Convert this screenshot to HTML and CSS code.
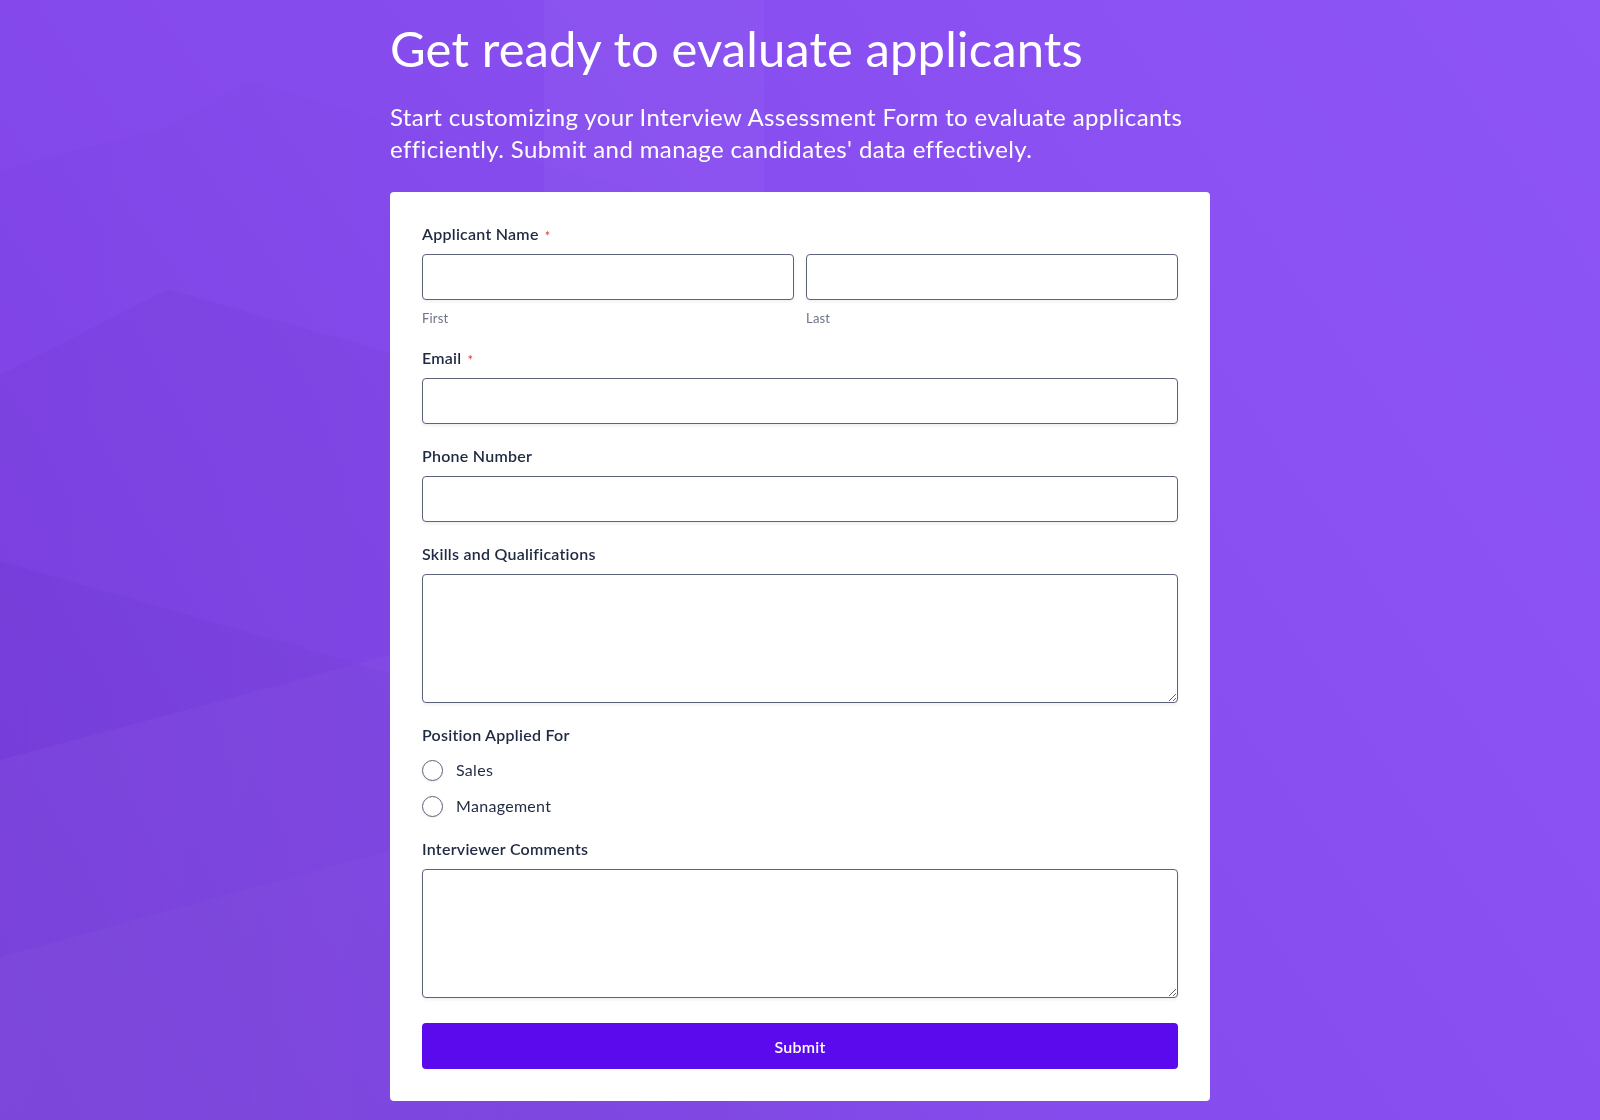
FILE: index.html
```html
<!DOCTYPE html>
<html lang="en">
<head>
<meta charset="utf-8">
<title>Interview Assessment Form</title>
<link rel="stylesheet" href="styles.css">
</head>
<body>
<div class="backdrop" aria-hidden="true">
  <svg class="backdrop-svg" viewBox="0 0 1600 1120" preserveAspectRatio="none" xmlns="http://www.w3.org/2000/svg">
    <defs>
      <linearGradient id="bgGrad" x1="1600" y1="0" x2="0" y2="1120" gradientUnits="userSpaceOnUse">
        <stop offset="0" stop-color="#8e55f6"/>
        <stop offset="0.5" stop-color="#874cee"/>
        <stop offset="1" stop-color="#7e42e5"/>
      </linearGradient>
      <linearGradient id="fadeDark" x1="0" y1="0" x2="1100" y2="0" gradientUnits="userSpaceOnUse">
        <stop offset="0" stop-color="#2a0070" stop-opacity="0.045"/>
        <stop offset="0.6" stop-color="#2a0070" stop-opacity="0.025"/>
        <stop offset="1" stop-color="#2a0070" stop-opacity="0"/>
      </linearGradient>
      <linearGradient id="fadeLight" x1="0" y1="0" x2="1100" y2="0" gradientUnits="userSpaceOnUse">
        <stop offset="0" stop-color="#ffffff" stop-opacity="0.035"/>
        <stop offset="1" stop-color="#ffffff" stop-opacity="0"/>
      </linearGradient>
    </defs>
    <rect x="0" y="0" width="1600" height="1120" fill="url(#bgGrad)"/>
    <rect x="544" y="0" width="220" height="192" fill="#ffffff" opacity="0.03"/>
    <polygon points="0,170 163,128 250,82 1600,460 1600,1120 0,1120" fill="url(#fadeDark)" opacity="0.5"/>
    <polygon points="0,375 168,289 1600,700 1600,1120 0,1120" fill="url(#fadeDark)"/>
    <polygon points="0,760 1600,330 1600,1120 0,1120" fill="url(#fadeLight)"/>
    <polygon points="0,561 1600,1020 1600,1120 0,1120" fill="url(#fadeDark)"/>
    <polygon points="0,957 1600,520 1600,1120 0,1120" fill="url(#fadeLight)" opacity="0.6"/>
  </svg>
</div>

<main class="page">
  <h1 class="title">Get ready to evaluate applicants</h1>
  <p class="subtitle">Start customizing your Interview Assessment Form to evaluate applicants efficiently. Submit and manage candidates' data effectively.</p>

  <form class="card">
    <div class="field">
      <label class="label">Applicant Name<span class="req">*</span></label>
      <div class="name-row">
        <div class="name-col">
          <input class="input" type="text">
          <span class="sublabel">First</span>
        </div>
        <div class="name-col">
          <input class="input" type="text">
          <span class="sublabel">Last</span>
        </div>
      </div>
    </div>

    <div class="field">
      <label class="label">Email<span class="req">*</span></label>
      <input class="input" type="email">
    </div>

    <div class="field">
      <label class="label">Phone Number</label>
      <input class="input" type="tel">
    </div>

    <div class="field">
      <label class="label">Skills and Qualifications</label>
      <textarea class="textarea"></textarea>
    </div>

    <div class="field field-radio">
      <span class="label">Position Applied For</span>
      <div class="radios">
        <label class="radio-row"><input class="radio" type="radio" name="position"><span class="radio-text">Sales</span></label>
        <label class="radio-row"><input class="radio" type="radio" name="position"><span class="radio-text">Management</span></label>
      </div>
    </div>

    <div class="field field-last">
      <label class="label">Interviewer Comments</label>
      <textarea class="textarea"></textarea>
    </div>

    <button class="submit" type="button">Submit</button>
  </form>
</main>
</body>
</html>
```

FILE: styles.css
```css
* {
  box-sizing: border-box;
}

html, body {
  margin: 0;
  padding: 0;
  height: 100%;
  overflow: hidden;
}

body {
  font-family: Lato, "Noto Sans", "Liberation Sans", sans-serif;
  background: #8449ea;
  color: #2c3345;
}

.backdrop {
  position: fixed;
  inset: 0;
  z-index: 0;
}

.backdrop-svg {
  display: block;
  width: 100%;
  height: 100%;
}

.page {
  position: relative;
  z-index: 1;
  width: 820px;
  margin: 0 auto;
  padding-top: 19px;
}

.title {
  margin: 0;
  font-size: 49px;
  line-height: 58px;
  font-weight: 400;
  letter-spacing: 0.1px;
  color: #ffffff;
}

.subtitle {
  margin: 24px 0 27px;
  font-size: 24px;
  line-height: 32px;
  font-weight: 400;
  letter-spacing: 0.38px;
  color: #ffffff;
}

.card {
  background: #ffffff;
  border-radius: 4px;
  padding: 32px;
}

.field {
  margin-bottom: 22px;
}

.field-radio {
  margin-bottom: 20px;
}

.field-last {
  margin-bottom: 25px;
}

.label {
  display: block;
  height: 20px;
  font-size: 16px;
  line-height: 20px;
  font-weight: 600;
  letter-spacing: 0.25px;
  color: #1f2a42;
  margin-bottom: 10px;
}

.req {
  color: #e5382f;
  font-size: 13px;
  line-height: 1;
  font-weight: 400;
  margin-left: 6px;
  position: relative;
  top: 1px;
}

.name-row {
  display: flex;
  gap: 12px;
}

.name-col {
  flex: 1 1 0;
  display: flex;
  flex-direction: column;
}

.input {
  display: block;
  width: 100%;
  height: 46px;
  border: 1px solid #5e6478;
  border-radius: 4px;
  background: #ffffff;
  box-shadow: 0 2px 3px rgba(60, 70, 100, 0.08);
  font: inherit;
  padding: 0 12px;
  outline: none;
}

.sublabel {
  display: block;
  margin-top: 10px;
  font-size: 13px;
  line-height: 16px;
  letter-spacing: 0.2px;
  color: #6c7385;
}

.textarea {
  display: block;
  width: 100%;
  height: 129px;
  border: 1px solid #5e6478;
  border-radius: 4px;
  background: #ffffff;
  box-shadow: 0 2px 3px rgba(60, 70, 100, 0.08);
  font: inherit;
  padding: 10px 12px;
  outline: none;
  resize: vertical;
}

.radios {
  display: flex;
  flex-direction: column;
  gap: 10px;
  margin-top: 12px;
}

.radio-row {
  display: flex;
  align-items: center;
  gap: 13px;
  height: 26px;
}

.radio {
  appearance: none;
  -webkit-appearance: none;
  margin: 0;
  width: 21px;
  height: 21px;
  border: 1px solid #5e6478;
  border-radius: 50%;
  background: #ffffff;
  box-shadow: 0 1px 2px rgba(60, 70, 100, 0.1);
  flex: 0 0 auto;
}

.radio-text {
  font-size: 16px;
  line-height: 20px;
  letter-spacing: 0.3px;
  color: #1f2a42;
}

.submit {
  display: block;
  width: 100%;
  height: 46px;
  border: none;
  border-radius: 4px;
  background: #5b0aee;
  color: #ffffff;
  font-family: Lato, "Noto Sans", "Liberation Sans", sans-serif;
  font-size: 16px;
  font-weight: 600;
  letter-spacing: 0.25px;
  cursor: pointer;
}
```
